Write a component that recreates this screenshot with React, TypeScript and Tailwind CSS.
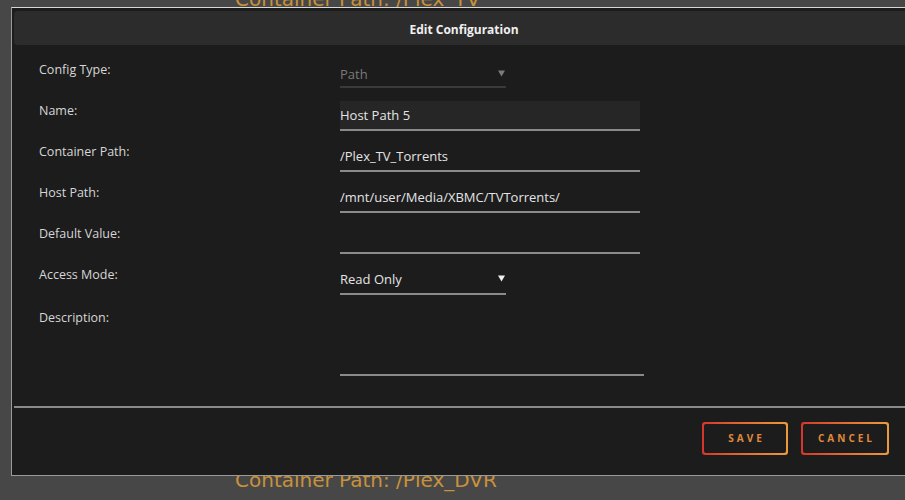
import React from "react";

const font = { fontFamily: '"Open Sans", "Noto Sans", sans-serif' };

function Row({ label, children, h = "h-[41px]", lt = "" }: { label: string; children?: React.ReactNode; h?: string; lt?: string }) {
  return (
    <div className={`flex items-start ${h}`}>
      <div className={`w-[326px] shrink-0 pl-[25px] text-[12.5px] leading-[20px] text-[#d6d6d6] ${lt}`}>{label}</div>
      <div className="flex-1">{children}</div>
    </div>
  );
}

function TextField({ value, bg = false }: { value?: string; bg?: boolean }) {
  return (
    <div
      className={`w-[300px] h-[30px] border-b-2 border-[#8a8a8a] pt-[5px] text-[13px] leading-[18px] text-[#e4e4e4] ${bg ? "bg-[#262626]" : ""}`}
    >
      {value}
    </div>
  );
}

function Caret({ color }: { color: string }) {
  return (
    <svg className="absolute right-[1px] top-[10px]" width="7" height="7" viewBox="0 0 7 7">
      <polygon points="0,0.5 7,0.5 3.5,6.5" fill={color} />
    </svg>
  );
}

function Btn({ label, w }: { label: string; w: string }) {
  return (
    <div className={`${w} h-[33px] rounded-[3px] bg-gradient-to-r from-[#d5352b] to-[#ec9a3b] p-[2px]`}>
      <div className="flex h-full w-full items-center justify-center rounded-[2px] bg-[#1c1c1c] pl-[3px] text-[10px] font-bold tracking-[3px] text-[#e08a3c]">
        {label}
      </div>
    </div>
  );
}

export default function App() {
  return (
    <div className="relative h-[500px] w-[905px] overflow-hidden bg-[#484747]" style={font}>
      <div
        className="flex h-full flex-col justify-between pl-[235px] text-[20px] text-[#c8913b]"
        style={{ fontFamily: '"DejaVu Sans", sans-serif' }}
      >
        <div className="-mt-[13px] leading-[24px]">Container Path: /Plex_TV</div>
        <div className="mb-[8px] leading-[24px]">Container Path: /Plex_DVR</div>
      </div>

      <div className="absolute left-[11px] top-[7px] flex h-[469px] w-[906px] flex-col border border-[#9a9a9a] border-t-[#d8d8d8] bg-[#1c1c1c] p-[2px]">
        <div className="mt-[1px] flex h-[34px] items-center justify-center rounded-[4px] bg-[#2c2c2c] pt-[3px] text-[12px] font-bold text-[#f0f0f0]">
          Edit Configuration
        </div>

        <div className="flex flex-col pt-[15px]">
          <Row label="Config Type:">
            <div className="relative h-[28px] w-[166px] border-b-2 border-[#3a3a3a] pt-[5px] text-[13px] leading-[18px] text-[#7a7a7a]">
              Path
              <Caret color="#7a7a7a" />
            </div>
          </Row>
          <Row label="Name:">
            <TextField value="Host Path 5" bg />
          </Row>
          <Row label="Container Path:">
            <TextField value="/Plex_TV_Torrents" />
          </Row>
          <Row label="Host Path:">
            <TextField value="/mnt/user/Media/XBMC/TVTorrents/" />
          </Row>
          <Row label="Default Value:">
            <TextField />
          </Row>
          <Row label="Access Mode:">
            <div className="relative h-[30px] w-[166px] border-b-2 border-[#8a8a8a] pt-[5px] text-[13px] leading-[18px] text-[#e4e4e4]">
              Read Only
              <Caret color="#f0f0f0" />
            </div>
          </Row>
          <Row label="Description:" h="h-[70px]" lt="pt-[2px]">
            <div className="h-[70px] w-[304px] border-b-2 border-[#8a8a8a]" />
          </Row>
        </div>

        <div className="mt-[30px] h-[2px] bg-[#8a8a8a]" />

        <div className="flex gap-[13px] pl-[688px] pt-[14px]">
          <Btn label="SAVE" w="w-[86px]" />
          <Btn label="CANCEL" w="w-[88px]" />
        </div>
      </div>
    </div>
  );
}
